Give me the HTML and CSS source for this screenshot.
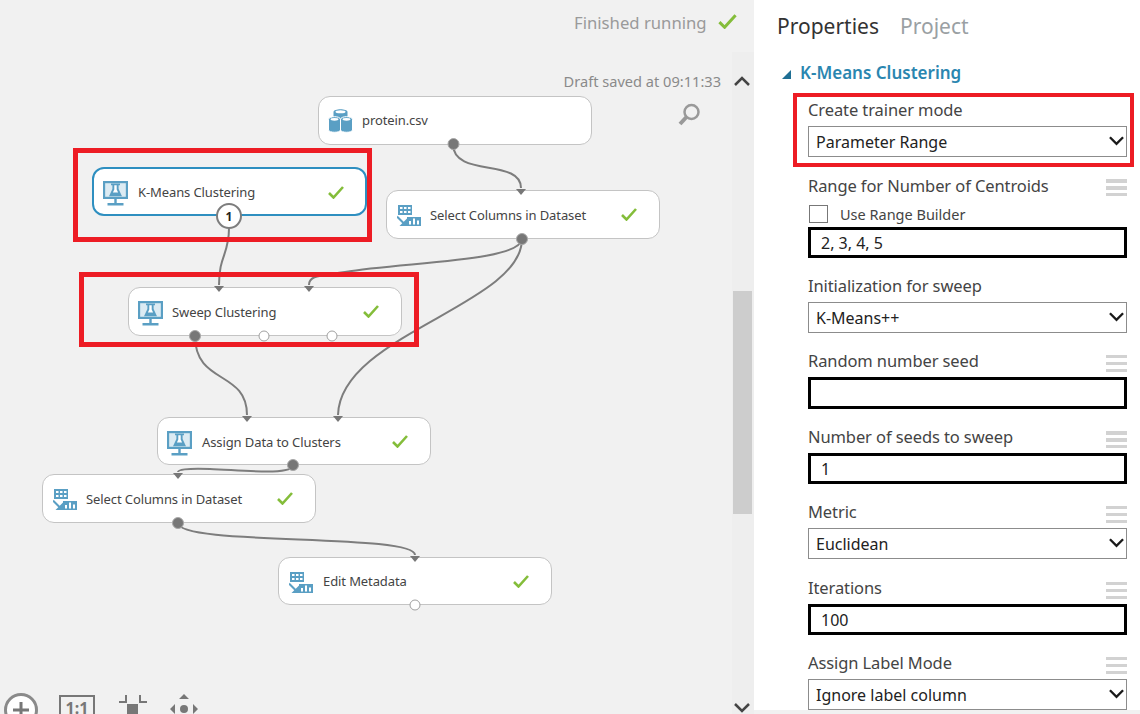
FILE: index.html
```html
<!DOCTYPE html>
<html lang="en">
<head>
<meta charset="utf-8">
<title>K-Means Clustering experiment</title>
<link rel="stylesheet" href="styles.css">
</head>
<body>
<svg width="0" height="0" class="defs">
  <defs>
    <symbol id="i-train" viewBox="0 0 25 25">
      <path fill="#dcebf3" d="M2.200 2.200h20.600v13.600H2.200z"/>
      <path fill="#5a9fc4" fill-rule="evenodd" d="M0 0h25v18H0zM2.200 2.200v13.600h20.600V2.200z"/>
      <path fill="#5a9fc4" d="M11.300 18h2.400v4.500h-2.400zM4.500 22h16v2.400h-16zM8 2.500h9v1.800h-1.400v3.600l3.400 7.300H6l3.400-7.300V4.300H8z"/>
      <path fill="#fff" d="M11.300 4.300h2.400v4.100l1.400 3.100h-5.200l1.400-3.100z"/>
    </symbol>
    <symbol id="i-data" viewBox="0 0 25 25">
      <path fill="#5a9fc4" d="M1 1h14v10H1z"/>
      <path fill="#fff" d="M3 3h2.500v2H3zM7 3h2.500v2H7zM11 3h2.500v2H11zM3 7h2.500v2H3zM7 7h2.500v2H7zM11 7h2.500v2H11z"/>
      <path fill="#5a9fc4" d="M10 13h14v9H10z"/>
      <path fill="#fff" d="M12 17h2v3.500h-2zM16 14.500h2v6h-2zM20 16.500h2v4h-2z"/>
      <path fill="none" stroke="#5a9fc4" stroke-width="2" d="M0 12.500l7 7"/>
      <path fill="#5a9fc4" d="M10 14.500V22H2.500z"/>
    </symbol>
    <symbol id="i-db" viewBox="0 0 25 25">
      <path fill="#5a9fc4" d="M5.500 4c0-3.600 14-3.600 14 0v10h-14z"/>
      <ellipse cx="12.500" cy="3.800" rx="5" ry="1.500" fill="#fff"/>
      <path fill="#5a9fc4" stroke="#fff" stroke-width="1" d="M.5 11.500c0-3.800 12-3.800 12 0V22c0 3-12 3-12 0zM12.500 11.500c0-3.800 12-3.800 12 0V22c0 3-12 3-12 0z"/>
      <ellipse cx="6.500" cy="11.300" rx="4" ry="1.400" fill="#fff"/>
      <ellipse cx="18.500" cy="11.300" rx="4" ry="1.400" fill="#fff"/>
    </symbol>
    <symbol id="i-check" viewBox="0 0 16 13">
      <path fill="none" stroke="#84bd3a" stroke-width="2.600" d="M1 7l4.500 4.500L15 1"/>
    </symbol>
    <symbol id="i-chev" viewBox="0 0 16 10">
      <path fill="none" stroke="currentColor" stroke-width="2.500" d="M1 1l7 7 7-7"/>
    </symbol>
  </defs>
</svg>

<div class="app">
  <main class="canvas">
    <div class="status">Finished running<svg class="status-check"><use href="#i-check"/></svg></div>
    <div class="draft">Draft saved at 09:11:33</div>

    <svg class="edges" viewBox="0 0 755 714">
      <path d="M453 144C453 178 521 158 521 188"/>
      <path d="M522 239C520 262 400 262 345 272C320 276 309 275 309 285"/>
      <path d="M522 239C522 305 340 335 338 415"/>
      <path d="M229 228C229 255 219 255 219 285"/>
      <path d="M195 336C195 385 247 370 247 415"/>
      <path d="M293 465C293 476 240 470 210 469C185 468 178 470 178 472"/>
      <path d="M178 523C178 546 415 533 415 555"/>
    </svg>

    <div class="node n-protein"><svg class="nicon"><use href="#i-db"/></svg><span class="nlabel">protein.csv</span></div>
    <div class="node n-kmeans active"><svg class="nicon"><use href="#i-train"/></svg><span class="nlabel">K-Means Clustering</span><svg class="ncheck"><use href="#i-check"/></svg></div>
    <div class="node n-select1"><svg class="nicon"><use href="#i-data"/></svg><span class="nlabel">Select Columns in Dataset</span><svg class="ncheck"><use href="#i-check"/></svg></div>
    <div class="node n-sweep"><svg class="nicon"><use href="#i-train"/></svg><span class="nlabel">Sweep Clustering</span><svg class="ncheck"><use href="#i-check"/></svg></div>
    <div class="node n-assign"><svg class="nicon"><use href="#i-train"/></svg><span class="nlabel">Assign Data to Clusters</span><svg class="ncheck"><use href="#i-check"/></svg></div>
    <div class="node n-select2"><svg class="nicon"><use href="#i-data"/></svg><span class="nlabel">Select Columns in Dataset</span><svg class="ncheck"><use href="#i-check"/></svg></div>
    <div class="node n-edit"><svg class="nicon"><use href="#i-data"/></svg><span class="nlabel">Edit Metadata</span><svg class="ncheck"><use href="#i-check"/></svg></div>

    <svg class="ports" viewBox="0 0 755 714">
      <g class="arrows">
        <path d="M516 189h10l-5 6z"/>
        <path d="M214 286h10l-5 6z"/>
        <path d="M304 286h10l-5 6z"/>
        <path d="M242 416h10l-5 6z"/>
        <path d="M333 416h10l-5 6z"/>
        <path d="M173 473h10l-5 6z"/>
        <path d="M410 556h10l-5 6z"/>
      </g>
      <circle class="full" cx="453.500" cy="144" r="5.500"/>
      <circle class="full" cx="522" cy="239" r="5.500"/>
      <circle class="full" cx="195" cy="336" r="5.500"/>
      <circle class="full" cx="293" cy="465" r="5.500"/>
      <circle class="full" cx="178" cy="523" r="5.500"/>
      <circle class="empty" cx="264" cy="336" r="5"/>
      <circle class="empty" cx="332" cy="336" r="5"/>
      <circle class="empty" cx="415" cy="605" r="5"/>
    </svg>
    <div class="badge">1</div>

    <svg class="search" viewBox="0 0 24 24"><circle cx="14.500" cy="9" r="7"/><path class="thick" d="M9.500 14L3 21"/></svg>

    <div class="scrollbar">
      <svg class="chev up"><use href="#i-chev"/></svg>
      <div class="thumb"></div>
      <svg class="chev down"><use href="#i-chev"/></svg>
    </div>

    <svg class="tool t-plus" viewBox="0 0 34 34"><circle cx="17" cy="17" r="15.500"/><path d="M17 9v16M9 17h16"/></svg>
    <div class="tool t-one">1:1</div>
    <svg class="tool t-fit" viewBox="0 0 30 30"><path d="M1 8h7V1M29 8h-7V1"/><rect x="9" y="10" width="11" height="20"/></svg>
    <svg class="tool t-move" viewBox="0 0 30 30"><path d="M15 0l5 5H10zM1 15l5-5v10zM29 15l-5-5v10zM15 29l5-5H10z"/><circle cx="15" cy="15" r="4"/></svg>

    <div class="mark m-kmeans"></div>
    <div class="mark m-sweep"></div>
  </main>

  <aside class="panel">
    <div class="tabs"><span class="tab on">Properties</span><span class="tab">Project</span></div>
    <div class="section"><span class="tri"></span>K-Means Clustering</div>
    <div class="fields">
      <div class="field marked">
        <div class="label">Create trainer mode</div>
        <div class="select">Parameter Range<svg class="sel-chev"><use href="#i-chev"/></svg></div>
      </div>
      <div class="field">
        <div class="label label-range">Range for Number of Centroids<span class="grip"></span></div>
        <div class="check-row"><span class="box"></span>Use Range Builder</div>
        <div class="input">2, 3, 4, 5</div>
      </div>
      <div class="field">
        <div class="label">Initialization for sweep</div>
        <div class="select">K-Means++<svg class="sel-chev"><use href="#i-chev"/></svg></div>
      </div>
      <div class="field">
        <div class="label">Random number seed<span class="grip"></span></div>
        <div class="input tall"></div>
      </div>
      <div class="field">
        <div class="label">Number of seeds to sweep<span class="grip"></span></div>
        <div class="input">1</div>
      </div>
      <div class="field">
        <div class="label">Metric<span class="grip"></span></div>
        <div class="select">Euclidean<svg class="sel-chev"><use href="#i-chev"/></svg></div>
      </div>
      <div class="field gap20">
        <div class="label">Iterations<span class="grip"></span></div>
        <div class="input">100</div>
      </div>
      <div class="field">
        <div class="label">Assign Label Mode<span class="grip"></span></div>
        <div class="select">Ignore label column<svg class="sel-chev"><use href="#i-chev"/></svg></div>
      </div>
    </div>
    <div class="panel-foot"></div>
  </aside>
</div>
</body>
</html>
```

FILE: styles.css
```css
* { box-sizing: border-box; }
html, body { margin: 0; height: 100%; overflow: hidden; }
body { font-family: "Noto Sans", "Open Sans", "Liberation Sans", sans-serif; color: #333; background: #fff; }
.defs { position: absolute; }

.app { display: flex; width: 1140px; height: 714px; overflow: hidden; }

/* Canvas */
.canvas { position: relative; width: 754px; height: 714px; flex: none; background: #f1f1f1; overflow: hidden; }
.status { position: absolute; left: 574px; top: 10px; font-size: 16.700px; line-height: 26px; color: #9a9a9a; display: flex; align-items: center; white-space: nowrap; }
.status-check { width: 19px; height: 15px; margin-left: 11px; margin-top: -3px; }
.draft { position: absolute; right: 33px; top: 71px; font-size: 14.600px; line-height: 20px; color: #8a8a8a; white-space: nowrap; }

.edges, .ports { position: absolute; left: 0; top: 0; width: 755px; height: 714px; pointer-events: none; }
.edges path { fill: none; stroke: #7d7d7d; stroke-width: 2; }
.arrows path { fill: #777; }
.ports .full { fill: #777; stroke: #a8a8a8; stroke-width: 1; }
.ports .empty { fill: #fff; stroke: #a0a0a0; stroke-width: 1; }

.node { position: absolute; width: 274px; height: 49px; background: #fff; border: 1px solid #c4c4c4; border-radius: 12px; display: flex; align-items: center; padding-left: 9px; }
.node.active { border: 2px solid #2e8fc0; }
.nicon { width: 25px; height: 25px; flex: none; margin-top: 4px; }
.nlabel { margin-left: 9px; font-size: 13px; color: #444; white-space: nowrap; letter-spacing: -.1px; }
.ncheck { position: absolute; left: 234px; top: 17px; width: 16px; height: 13px; }

.n-protein { left: 318px; top: 96px; }
.n-protein .nicon { margin-top: 0; }
.n-protein .nlabel { margin-top: -2px; }
.n-kmeans { left: 92px; top: 167px; width: 275px; }
.n-kmeans .nlabel { margin-left: 10px; }
.n-select1 { left: 386px; top: 190px; padding-left: 10px; }
.n-select1 .nlabel { margin-left: 8px; }
.n-sweep { left: 128px; top: 287px; }
.n-assign { left: 157px; top: 417px; height: 48px; }
.n-assign .nlabel { margin-left: 10px; margin-top: 2px; }
.n-select2 { left: 42px; top: 474px; padding-left: 10px; }
.n-select2 .nlabel { margin-left: 8px; }
.n-edit { left: 278px; top: 557px; height: 48px; padding-left: 10px; }

.badge { position: absolute; left: 216px; top: 203px; width: 26px; height: 26px; border-radius: 50%; background: #fff; border: 2px solid #7d7d7d; font-size: 12px; font-weight: 700; color: #222; display: flex; align-items: center; justify-content: center; }

.search { position: absolute; left: 677px; top: 103px; width: 24px; height: 24px; }
.search circle, .search path { fill: none; stroke: #999; stroke-width: 2.500; }
.search .thick { stroke-width: 4; }

.scrollbar { position: absolute; left: 732px; top: 52px; width: 22px; height: 662px; background: #eeeeee; }
.thumb { position: absolute; left: 1px; top: 239px; width: 19px; height: 223px; background: #cdcdcd; }
.chev { position: absolute; left: 2px; width: 16px; height: 10px; color: #444; }
.chev.up { top: 24px; transform: scaleY(-1); }
.chev.down { top: 651px; }

.tool { position: absolute; }
.t-plus { left: 4px; top: 693px; width: 34px; height: 34px; }
.t-plus circle { fill: #fff; stroke: #8a8a8a; stroke-width: 3; }
.t-plus path { fill: none; stroke: #777; stroke-width: 3; }
.t-one { left: 59px; top: 695px; width: 36px; height: 19px; border: 2px solid #777; border-bottom: 0; font-size: 16px; line-height: 22px; font-weight: 700; color: #777; text-align: center; }
.t-fit { left: 118px; top: 694px; width: 30px; height: 30px; }
.t-fit path { fill: none; stroke: #777; stroke-width: 2; }
.t-fit rect { fill: #777; }
.t-move { left: 169px; top: 694px; width: 30px; height: 30px; }
.t-move path, .t-move circle { fill: #777; }

.mark { position: absolute; border: 5px solid #ed1c24; }
.m-kmeans { left: 73px; top: 148px; width: 299px; height: 94px; }
.m-sweep { left: 79px; top: 272px; width: 340px; height: 75px; }

/* Properties panel */
.panel { position: relative; flex: 1; height: 714px; background: #fff; overflow: hidden; }
.tabs { display: flex; gap: 21px; padding: 11px 0 0 23px; height: 55px; font-size: 21px; line-height: 30px; color: #9aa0a3; }
.tab.on { color: #333; }
.section { position: relative; display: flex; align-items: center; height: 36px; padding: 0 0 2px 46px; font-size: 17px; font-weight: 600; color: #2a86b0; }
.tri { position: absolute; left: 28px; top: 15px; width: 0; height: 0; border-style: solid; border-width: 0 0 9px 9px; border-color: transparent transparent #1f6f94 transparent; }
.fields { display: flex; flex-direction: column; gap: 19px; padding: 10px 13px 0 54px; }
.field { position: relative; }
.gap20 { margin-top: 1px; }
.label { position: relative; height: 25px; line-height: 17px; font-size: 16.500px; color: #444; white-space: nowrap; letter-spacing: -.1px; }
.label-range { line-height: 19px; }
.select { position: relative; height: 31px; border: 1.500px solid #8c8c8c; background: #fff; font-size: 16px; line-height: 30px; padding-left: 7px; color: #222; }
.sel-chev { position: absolute; right: 2px; top: 9px; width: 15px; height: 10px; color: #1a1a1a; }
.input { height: 31px; border: 3px solid #000; background: #fff; font-size: 16px; line-height: 26px; padding-left: 10px; color: #222; }
.input.tall { height: 32px; }
.grip { position: absolute; right: 0; top: 3px; width: 21px; height: 17px; background: linear-gradient(#d2d2d2 0 3.500px, transparent 3.500px 7px, #d2d2d2 7px 10.500px, transparent 10.500px 14px, #d2d2d2 14px); }
.check-row { display: flex; align-items: center; height: 26px; padding-bottom: 1px; font-size: 14.500px; color: #444; }
.box { flex: none; width: 19px; height: 18px; margin: 1px 12px 0 1px; border: 1.500px solid #777; background: #fff; }
.marked { margin: -8px -7px -10px -15px; padding: 4px 3px 6px 11px; border: 4px solid #ed1c24; }
.panel-foot { position: absolute; left: 0; right: 0; bottom: 0; height: 4px; background: #f1f1f1; }
```
